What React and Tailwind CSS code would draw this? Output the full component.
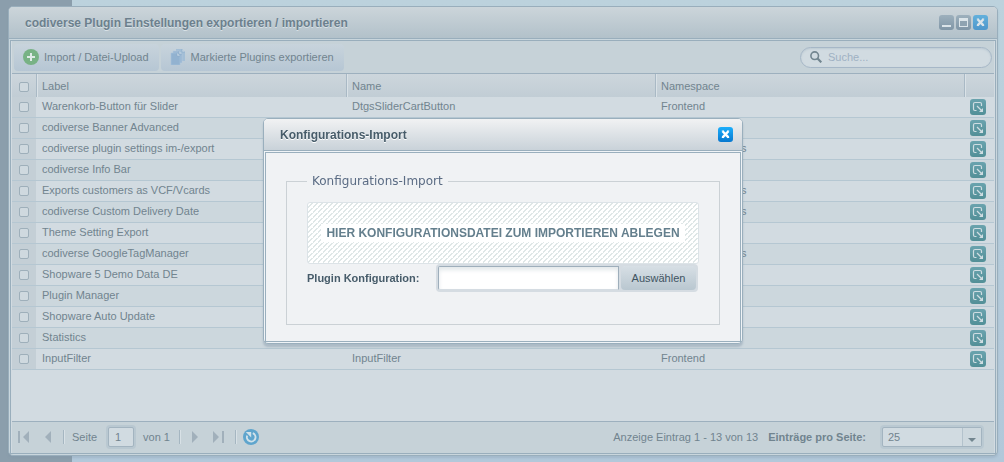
import React from "react";

const rows = [
  { label: "Warenkorb-Button für Slider", name: "DtgsSliderCartButton", namespace: "Frontend" },
  { label: "codiverse Banner Advanced" },
  { label: "codiverse plugin settings im-/export", namespace: "ShopwarePlugins" },
  { label: "codiverse Info Bar" },
  { label: "Exports customers as VCF/Vcards", namespace: "ShopwarePlugins" },
  { label: "codiverse Custom Delivery Date", namespace: "ShopwarePlugins" },
  { label: "Theme Setting Export" },
  { label: "codiverse GoogleTagManager", namespace: "ShopwarePlugins" },
  { label: "Shopware 5 Demo Data DE" },
  { label: "Plugin Manager" },
  { label: "Shopware Auto Update" },
  { label: "Statistics" },
  { label: "InputFilter", name: "InputFilter", namespace: "Frontend" },
];

function CloseGlyph() {
  return (
    <svg viewBox="0 0 15 15" className="size-full" aria-hidden="true">
      <path d="M4.6 4.2 L10.4 10.4 M10.4 4.2 L4.6 10.4" stroke="currentColor" strokeWidth="2.4" />
      <path d="M3.8 4h2M9.2 4h2M3.8 10.5h2M9.2 10.5h2" stroke="currentColor" strokeWidth="1" />
    </svg>
  );
}

function WindowControls() {
  return (
    <div className="flex gap-[2px] text-[#dbe4e9]">
      <button type="button" aria-label="Minimieren" className="size-[15px] rounded-[3px] bg-linear-to-b from-[#9db0bd] to-[#8096a6]">
        <svg viewBox="0 0 15 15" className="size-full" aria-hidden="true">
          <path d="M3 11h9" stroke="currentColor" strokeWidth="2" />
        </svg>
      </button>
      <button type="button" aria-label="Maximieren" className="size-[15px] rounded-[3px] bg-linear-to-b from-[#9db0bd] to-[#8096a6]">
        <svg viewBox="0 0 15 15" className="size-full" aria-hidden="true">
          <path fill="currentColor" d="M3 3h9v9H3z" />
          <path fill="#8fa3b1" d="M4 6h7v5H4z" />
        </svg>
      </button>
      <button type="button" aria-label="Schließen" className="size-[15px] rounded-[3px] bg-linear-to-b from-[#62b0dc] to-[#4f97cb]">
        <CloseGlyph />
      </button>
    </div>
  );
}

function PlusIcon() {
  return (
    <svg viewBox="0 0 16 16" className="size-4" aria-hidden="true">
      <circle cx="8" cy="8" r="8" fill="#78b285" />
      <path d="M8 4v8M4 8h8" stroke="#dfeae8" strokeWidth="2" />
    </svg>
  );
}

function DocumentsIcon() {
  return (
    <svg viewBox="0 0 16 16" className="size-4" aria-hidden="true">
      <path d="M6 0h6l3 3v9H6z" fill="#a3bed6" />
      <path d="M3 2h6l3 3v9H3z" fill="#98b6d2" stroke="#b5cbdd" strokeWidth=".6" />
      <path d="M1 4h6l3 3v9H1z" fill="#92b2d0" stroke="#aac4db" strokeWidth=".6" />
      <path d="M12 0v3h3M9 2v3h3M7 4v3h3" fill="#c3d5e2" stroke="#87a6c5" strokeWidth=".5" />
    </svg>
  );
}

function OpenIcon() {
  return (
    <svg viewBox="0 0 16 16" className="block size-4" aria-hidden="true">
      <path
        d="M6.5 11.5H5Q3.5 11.5 3.5 10V5Q3.5 3.5 5 3.5h5q1.5 0 1.5 1.5v2"
        fill="none"
        stroke="#cfdde2"
        strokeWidth="1.2"
      />
      <path d="M7 7l5 5" stroke="#cfdde2" strokeWidth="1.3" />
      <path d="M13 9v4H9z" fill="#cfdde2" />
    </svg>
  );
}

function SearchIcon() {
  return (
    <svg viewBox="0 0 12 12" className="size-3 shrink-0" aria-hidden="true">
      <circle cx="4.7" cy="4.7" r="3.8" fill="none" stroke="#72858f" strokeWidth="1.6" />
      <path d="M7.3 7.3l4 4" stroke="#72858f" strokeWidth="2.2" />
    </svg>
  );
}

function PagerIcon({ d }) {
  return (
    <svg viewBox="0 0 12 12" className="block size-3" aria-hidden="true">
      <path d={d} fill="#a1b0bb" />
    </svg>
  );
}

function Separator() {
  return <span className="h-[14px] w-[2px] border-l border-[#a5b6c1] bg-[#d8e1e6]" />;
}

function Tick({ label }) {
  return (
    <input
      type="checkbox"
      aria-label={label}
      className="ml-[7px] mt-[5px] block size-[10px] appearance-none rounded-[2px] border border-[#9eafba] bg-[#cfd9df]"
    />
  );
}

function Toolbar() {
  const button =
    "flex h-[27px] items-center gap-[5px] rounded-[4px] bg-linear-to-b from-[#c8d4dc] to-[#b6c6d4] pl-[9px] pr-[10px]";
  return (
    <div className="flex h-[33px] items-center justify-between border-b border-[#9db0be] bg-[#c6d2d8] pl-[2px] pr-[2px]">
      <div className="flex gap-[2px]">
        <button type="button" className={button}>
          <PlusIcon />
          Import / Datei-Upload
        </button>
        <button type="button" className={button}>
          <DocumentsIcon />
          Markierte Plugins exportieren
        </button>
      </div>
      <label className="flex h-[21px] w-[192px] items-center gap-[6px] rounded-full border border-[#a6b7c7] bg-[#d1dbe1] px-[9px] shadow-[inset_0_1px_2px_#bccad3]">
        <SearchIcon />
        <input
          type="search"
          aria-label="Suche"
          placeholder="Suche..."
          className="w-full bg-transparent outline-none placeholder:text-[#9fb1c3]"
        />
      </label>
    </div>
  );
}

function PluginTable() {
  const head = "border-l border-[#a9b9c5] pl-[5px] text-left font-normal shadow-[inset_1px_0_0_#dae2e7]";
  const cell = "pt-0 pb-[2px] pl-[6px]";
  return (
    <table className="w-full table-fixed border-separate border-spacing-0">
      <colgroup>
        <col className="w-[24px]" />
        <col className="w-[310px]" />
        <col className="w-[309px]" />
        <col />
        <col className="w-[30px]" />
      </colgroup>
      <thead>
        <tr className="h-[23px] bg-linear-to-b from-[#cdd6dc] to-[#c1cdd5]">
          <th className="p-0 align-top">
            <div className="pt-[3px]"><Tick label="Alle auswählen" /></div>
          </th>
          <th className={head}>Label</th>
          <th className={head}>Name</th>
          <th className={head}>Namespace</th>
          <th className={head} aria-label="Aktion" />
        </tr>
      </thead>
      <tbody>
        {rows.map((row) => (
          <tr key={row.label} className="h-[21px] bg-[#d2dbe1] even:bg-[#ccd7dd] *:border-b *:border-[#b5c7d2]">
            <td className="bg-[#c4cfd6] p-0 align-top">
              <Tick label={row.label} />
            </td>
            <td className={cell}>{row.label}</td>
            <td className={cell}>{row.name}</td>
            <td className={cell}>{row.namespace}</td>
            <td className="pl-[6px]">
              <button
                type="button"
                aria-label={`${row.label} öffnen`}
                className="block rounded-[3px] bg-linear-to-b from-[#6aa3ae] to-[#528f97]"
              >
                <OpenIcon />
              </button>
            </td>
          </tr>
        ))}
      </tbody>
    </table>
  );
}

function Pager() {
  return (
    <div className="flex h-[32px] shrink-0 items-center justify-between border-t border-[#9db0be] bg-[#c6d2d8] pr-[10px] pb-[2px] pl-[6px]">
      <div className="flex items-center">
        <div className="flex items-center gap-[14px]">
          <button type="button" aria-label="Erste Seite"><PagerIcon d="M0 0h2v12H0zM11 0v12L5 6z" /></button>
          <button type="button" aria-label="Vorige Seite"><PagerIcon d="M7 0v12L1 6z" /></button>
        </div>
        <div className="ml-[7px] flex items-center gap-[7px]">
          <Separator />
          <label htmlFor="page">Seite</label>
          <span className="ml-[2px] rounded-[4px] bg-[#b9c8d1] p-[2px]">
            <input
              id="page"
              defaultValue="1"
              className="block h-5 w-[26px] rounded-[2px] border border-[#a3b4c0] bg-[#d1dbe1] pl-[6px] outline-none"
            />
          </span>
          <span>von 1</span>
        </div>
        <div className="ml-[9px] flex items-center gap-[10px]">
          <Separator />
          <button type="button" aria-label="Nächste Seite"><PagerIcon d="M1 0v12l6-6z" /></button>
          <button type="button" aria-label="Letzte Seite"><PagerIcon d="M0 0v12l6-6zM9 0h2v12h-2z" /></button>
          <Separator />
        </div>
        <button type="button" aria-label="Aktualisieren" className="ml-[6px]">
          <svg viewBox="0 0 16 16" className="block size-4" aria-hidden="true">
            <circle cx="8" cy="8" r="8" fill="#5fa5cd" />
            <path d="M9.8 4.2A4.3 4.3 0 1 1 4.2 6.6" fill="none" stroke="#d2e2ea" strokeWidth="1.9" />
            <path d="M2.8 3h5.4v5.4z" fill="#d2e2ea" />
          </svg>
        </button>
      </div>
      <div className="flex items-center">
        <span>Anzeige Eintrag 1 - 13 von 13</span>
        <label htmlFor="perPage" className="ml-[10px] font-bold">Einträge pro Seite:</label>
        <span className="relative ml-[14px] rounded-[4px] bg-[#bac9d2] p-[2px]">
          <select
            id="perPage"
            className="block h-5 w-[100px] appearance-none rounded-[2px] border border-[#a3b4c0] bg-[#d1dbe1] pl-[5px] outline-none"
          >
            <option>25</option>
          </select>
          <span className="pointer-events-none absolute top-[3px] right-[3px] flex h-[18px] w-[19px] items-end justify-center border-l border-[#b3c2cc] bg-[#cdd8de] pb-[4px]">
            <svg viewBox="0 0 8 4" className="h-1 w-2" aria-hidden="true">
              <path d="M0 0h8L4 4z" fill="#73868f" />
            </svg>
          </span>
        </span>
      </div>
    </div>
  );
}

function ImportDialog() {
  return (
    <div className="fixed inset-0 flex items-center justify-center pl-[2px]">
      <section
        role="dialog"
        aria-labelledby="dialogTitle"
        className="w-[480px] rounded-[5px] border border-[#9aafbd] bg-[#f0f4f7] text-[#475c6a] shadow-[0_3px_2px_#7c92a466]"
      >
        <header className="flex h-[31px] items-center justify-between rounded-t-[4px] bg-linear-to-b from-[#f1f2f3] to-[#c9d2d9] pl-4 pr-[9px]">
          <h2 id="dialogTitle" className="text-[12px] font-bold [text-shadow:0_1px_0_#fff]">Konfigurations-Import</h2>
          <button type="button" aria-label="Schließen" className="size-[15px] rounded-[3px] bg-linear-to-b from-[#1caefb] to-[#0878cf] text-white">
            <CloseGlyph />
          </button>
        </header>
        <div className="border-t border-[#9aafbd] px-px pt-px pb-px">
          <div className="border border-[#9aafbd] bg-[#f0f2f4] px-5 pt-5 pb-4">
            <fieldset className="border border-[#cbd1d5] px-5 pb-[32px]">
              <legend className="px-[5px] font-['DejaVu_Sans',sans-serif] text-[12px] leading-[16px] text-[#5b6c84]">
                Konfigurations-Import
              </legend>
              <div className="mt-[13px] flex h-[62px] items-center justify-center rounded-[3px] border border-[#dce3e7] bg-[linear-gradient(135deg,#fff_40%,#dfe7e7_40%,#dfe7e7_60%,#fff_60%)] bg-[length:5px_5px]">
                <strong className="bg-white px-[5px] text-[12px] leading-[18px] text-[#647f8d]">
                  HIER KONFIGURATIONSDATEI ZUM IMPORTIEREN ABLEGEN
                </strong>
              </div>
              <div className="flex items-center justify-between">
                <label htmlFor="config" className="font-bold">Plugin Konfiguration:</label>
                <div className="mr-px flex rounded-[4px] bg-[#d5dce2] p-[2px]">
                  <input
                    id="config"
                    className="h-6 w-[181px] rounded-l-[2px] border border-[#9eaebb] border-b-[#d5dce2] bg-white px-[5px] shadow-[inset_0_3px_4px_#e3e8ea] outline-none"
                  />
                  <button type="button" className="ml-[2px] h-6 w-[75px] rounded-[4px] bg-linear-to-b from-[#d7dfe5] to-[#b9c7d0] text-[#3f5361]">
                    Auswählen
                  </button>
                </div>
              </div>
            </fieldset>
          </div>
        </div>
      </section>
    </div>
  );
}

export default function App() {
  return (
    <main className="flex h-screen flex-col bg-linear-to-b from-[#bcd2dd] to-[#b2c8da] font-['Liberation_Sans',Arial,sans-serif] text-[11px] leading-[14px] text-[#71848f]">
      <div className="flex min-h-0 flex-1 bg-[linear-gradient(#8b9eac,#8b9eac)] bg-[length:72px_100%] bg-no-repeat pt-[6px] pr-[6px] pb-[6px] pl-[8px]">
        <section className="flex min-w-0 flex-1 flex-col rounded-[5px] border border-[#99aebc] bg-[#c9d6dd] shadow-[0_2px_2px_#7c92a444]">
          <header className="flex h-[31px] shrink-0 items-center justify-between rounded-t-[4px] bg-linear-to-b from-[#ccd5da] to-[#b2c1ca] pl-4 pr-[9px]">
            <h1 className="text-[12px] font-bold text-[#6c808d] [text-shadow:0_1px_0_#d8e1e6]">
              codiverse Plugin Einstellungen exportieren / importieren
            </h1>
            <WindowControls />
          </header>
          <div className="flex min-h-0 flex-1 flex-col border-t border-[#99aebc] p-px">
            <div className="flex min-h-0 flex-1 flex-col border border-[#99aebc] bg-[#d2dbe1] px-px">
              <Toolbar />
              <div className="min-h-0 flex-1 overflow-hidden">
                <PluginTable />
              </div>
              <Pager />
            </div>
          </div>
        </section>
      </div>
      <ImportDialog />
    </main>
  );
}
